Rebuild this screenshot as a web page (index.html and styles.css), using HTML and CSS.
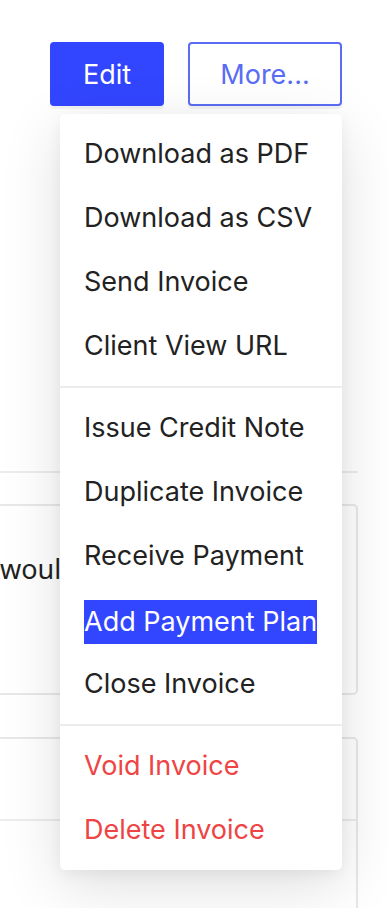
FILE: index.html
```html
<!DOCTYPE html>
<html lang="en">
<head>
    <meta charset="UTF-8">
    <meta name="viewport" content="width=device-width, initial-scale=1.0">
    <title>Invoice Actions</title>
    <link rel="stylesheet" href="styles.css">
</head>
<body>

<div class="toolbar">
    <button class="btn btn-primary">Edit</button>
    <div class="more-wrap">
        <button class="btn btn-outline">More...</button>

        <!-- Actions dropdown -->
        <div class="menu">
            <ul class="menu-section">
                <li>Download as PDF</li>
                <li>Download as CSV</li>
                <li>Send Invoice</li>
                <li>Client View URL</li>
            </ul>
            <ul class="menu-section">
                <li>Issue Credit Note</li>
                <li>Duplicate Invoice</li>
                <li>Receive Payment</li>
                <li><span class="selected">Add Payment Plan</span></li>
                <li>Close Invoice</li>
            </ul>
            <ul class="menu-section danger">
                <li>Void Invoice</li>
                <li>Delete Invoice</li>
            </ul>
        </div>
    </div>
</div>

<div class="content">
    <div class="divider"></div>
    <div class="card card-note">
        <p>would</p>
    </div>
    <div class="card card-table">
        <div class="row"></div>
    </div>
</div>

</body>
</html>
```

FILE: styles.css
```css
body {
    font-family: Inter, "Noto Sans", sans-serif;
    background-color: #ffffff;
    color: #222;
    margin: 0;
    padding: 0;
    height: 908px;
    overflow: hidden;
}

.toolbar {
    display: flex;
    justify-content: flex-end;
    gap: 24px;
    padding: 42px 46px 0 0;
}

.btn {
    font-family: inherit;
    font-size: 27px;
    height: 64px;
    border-radius: 4px;
    cursor: pointer;
    box-shadow: 0 3px 1px rgba(0, 0, 0, 0.05);
}

.btn-primary {
    width: 114px;
    background-color: #3246ff;
    border: none;
    color: #fff;
}

.btn-outline {
    width: 154px;
    background-color: #fff;
    border: 2px solid #5a6cf3;
    color: #5a6cf3;
}

.more-wrap {
    position: relative;
}

.menu {
    position: absolute;
    top: 72px;
    right: 0;
    width: 282px;
    background-color: #fff;
    border-radius: 5px;
    box-shadow: 0 16px 60px rgba(0, 0, 0, 0.13), 0 4px 14px rgba(0, 0, 0, 0.05);
    z-index: 10;
}

.menu-section {
    list-style: none;
    margin: 0;
    padding: 8px 0;
}

.menu-section + .menu-section {
    border-top: 2px solid #ececec;
}

.menu-section li {
    height: 64px;
    line-height: 64px;
    padding-left: 24px;
    font-size: 27px;
    white-space: nowrap;
}

.menu-section.danger li {
    color: #ee4444;
}

.selected {
    display: inline-block;
    line-height: 44px;
    background-color: #3246ff;
    color: #fff;
    vertical-align: middle;
}

.content {
    margin: 0 30px 0 -20px;
    padding-top: 365px;
}

.divider {
    border-top: 2px solid #ececec;
    margin-bottom: 31px;
}

.card {
    border: 2px solid #e8e8e8;
    border-radius: 5px;
}

.card-note {
    height: 187px;
    margin-bottom: 42px;
}

.card-note p {
    margin: 44px 0 0 18px;
    font-size: 27px;
    font-family: "Noto Sans", sans-serif;
}

.card-table {
    height: 220px;
}

.row {
    height: 80px;
    border-bottom: 2px solid #ececec;
}
```
